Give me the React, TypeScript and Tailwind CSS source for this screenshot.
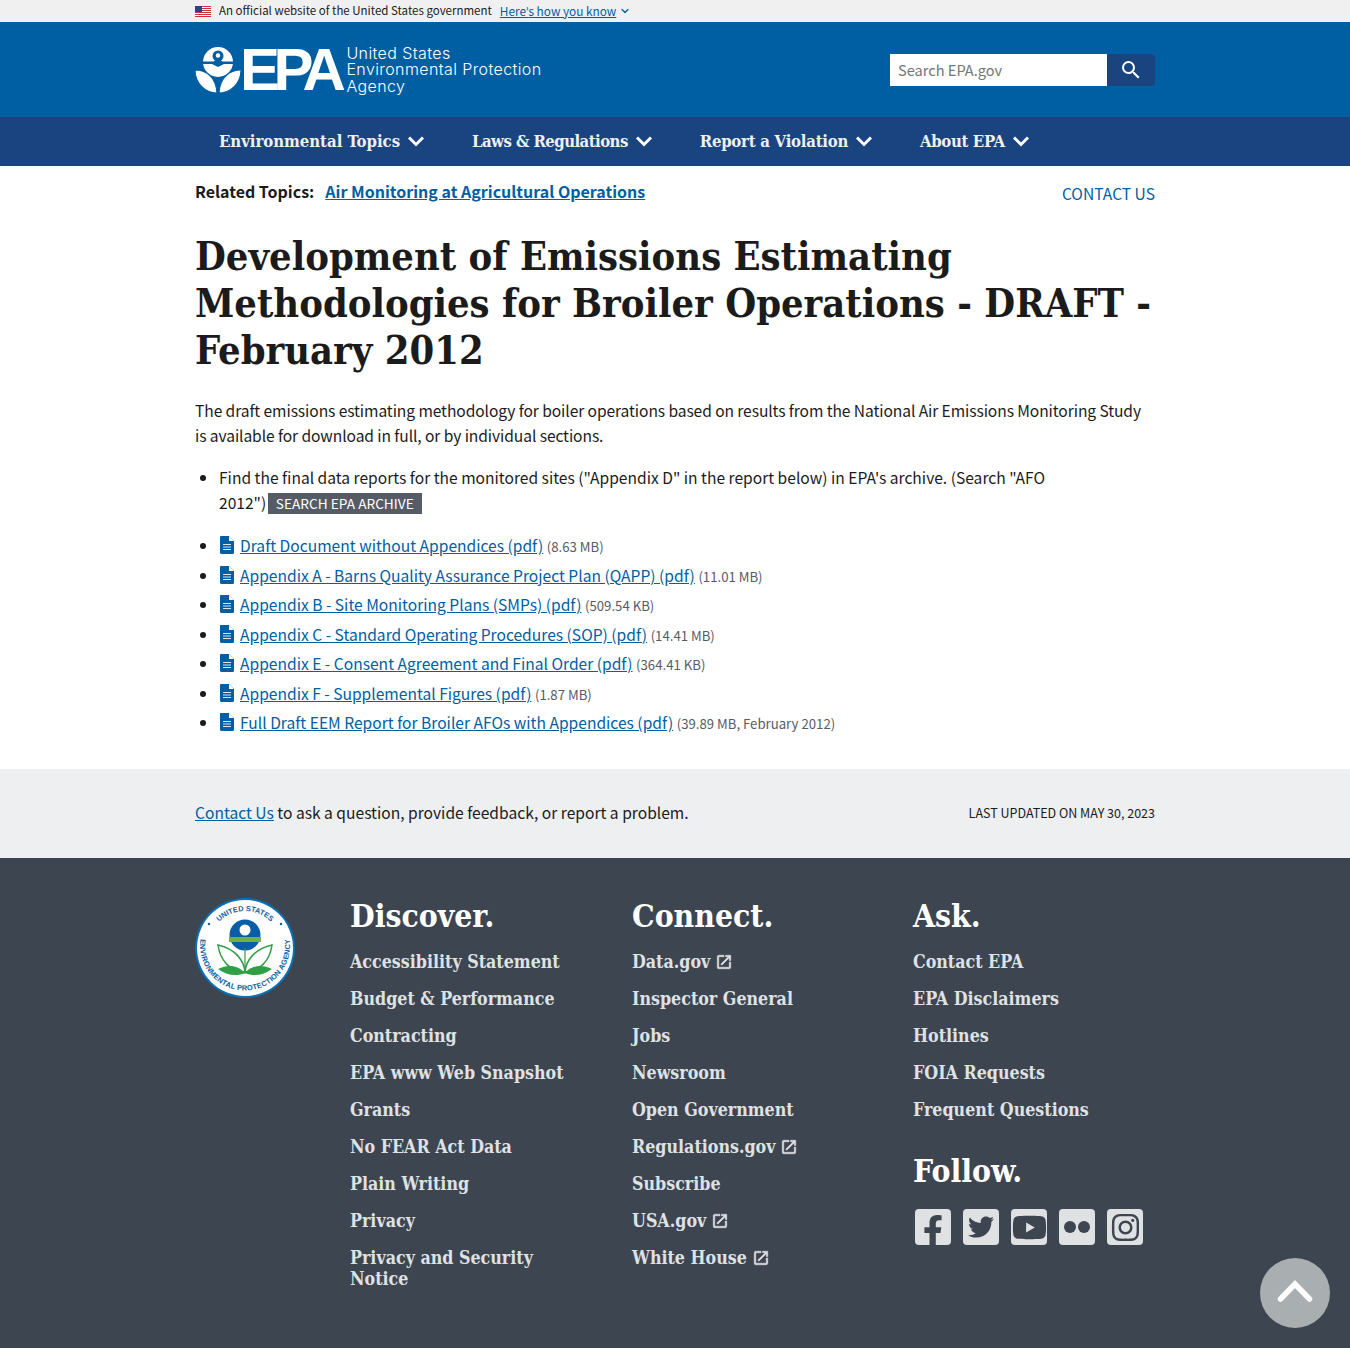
import { ChevronDown } from "lucide-react";
import { FaFacebookF, FaInstagram, FaTwitter, FaYoutube } from "react-icons/fa";

const sans = "font-['Noto_Sans_CJK_SC',Lato,sans-serif]";
const serif = "font-['DejaVu_Serif_Condensed','DejaVu_Serif',serif]";

const navItems = [
  ["Environmental Topics", "tracking-[-0.03px]"],
  ["Laws & Regulations", "tracking-[-0.55px]"],
  ["Report a Violation", "tracking-[-0.25px]"],
  ["About EPA", "tracking-[-0.35px]"],
];

const files = [
  ["Draft Document without Appendices (pdf)", "(8.63 MB)"],
  ["Appendix A - Barns Quality Assurance Project Plan (QAPP) (pdf)", "(11.01 MB)"],
  ["Appendix B - Site Monitoring Plans (SMPs) (pdf)", "(509.54 KB)"],
  ["Appendix C - Standard Operating Procedures (SOP) (pdf)", "(14.41 MB)"],
  ["Appendix E - Consent Agreement and Final Order (pdf)", "(364.41 KB)"],
  ["Appendix F - Supplemental Figures (pdf)", "(1.87 MB)"],
  ["Full Draft EEM Report for Broiler AFOs with Appendices (pdf)", "(39.89 MB, February 2012)"],
];

const discover = [
  "Accessibility Statement",
  "Budget & Performance",
  "Contracting",
  "EPA www Web Snapshot",
  "Grants",
  "No FEAR Act Data",
  "Plain Writing",
  "Privacy",
  "Privacy and Security Notice",
];

const connect: [string, boolean][] = [
  ["Data.gov", true],
  ["Inspector General", false],
  ["Jobs", false],
  ["Newsroom", false],
  ["Open Government", false],
  ["Regulations.gov", true],
  ["Subscribe", false],
  ["USA.gov", true],
  ["White House", true],
];

const ask = ["Contact EPA", "EPA Disclaimers", "Hotlines", "FOIA Requests", "Frequent Questions"];

function Flag() {
  return (
    <svg width="16" height="11" viewBox="0 0 16 11" className="shrink-0">
      <rect width="16" height="11" fill="#fff" />
      {[0, 2, 4, 6, 8, 10].map((y) => (
        <rect key={y} y={y} width="16" height="1" fill="#c8313e" />
      ))}
      <rect width="7" height="6" fill="#2f3f8f" />
    </svg>
  );
}

function EpaMark() {
  return (
    <svg width="46" height="46" viewBox="0 0 46 46" className="shrink-0">
      <circle cx="23" cy="15" r="15" fill="#fff" />
      <circle cx="23" cy="9" r="5.500" fill="#005ea2" />
      <circle cx="23" cy="8.500" r="2.200" fill="#fff" />
      <path d="M7 14.500h11c1.500 0 2.500-1 3-2.500h4c.5 1.500 1.500 2.500 3 2.500h11v2.500H29l-6 3-6-3H7z" fill="#005ea2" />
      <path d="M0 23c10 0 21 6 22 23C10 46 0 36 0 23z" fill="#fff" stroke="#005ea2" strokeWidth="1.200" />
      <path d="M46 23c-10 0-21 6-22 23 12 0 22-10 22-23z" fill="#fff" stroke="#005ea2" strokeWidth="1.200" />
    </svg>
  );
}

function Seal() {
  return (
    <svg width="100" height="100" viewBox="0 0 100 100" className="shrink-0">
      <circle cx="50" cy="50" r="50" fill="#0a70b5" />
      <circle cx="50" cy="50" r="48" fill="#fff" />
      <defs>
        <path id="sealTop" d="M13 50A37 37 0 0 1 87 50" />
        <path id="sealBottom" d="M6.500 36A45 45 0 1 0 93.500 36" />
      </defs>
      <text fontSize="7.400" fontWeight="700" fill="#0a5e9c" fontFamily="Liberation Sans, sans-serif">
        <textPath href="#sealTop" startOffset="50%" textAnchor="middle">UNITED STATES</textPath>
      </text>
      <text fontSize="7.400" fontWeight="700" letterSpacing="0.2" fill="#0a5e9c" fontFamily="Liberation Sans, sans-serif">
        <textPath href="#sealBottom" startOffset="50%" textAnchor="middle">ENVIRONMENTAL PROTECTION AGENCY</textPath>
      </text>
      <circle cx="14" cy="26" r="1.200" fill="#0a5e9c" />
      <circle cx="86" cy="26" r="1.200" fill="#0a5e9c" />
      <circle cx="50" cy="37" r="15.500" fill="#0a5ea8" />
      <rect x="34" y="39" width="32" height="5" fill="#6cb33f" />
      <circle cx="50" cy="32" r="5.500" fill="#fff" />
      <path d="M50 74c-1-11-9-23-27-27 2 15 12 27 27 27z" fill="#fff" stroke="#2f9e44" strokeWidth="1.500" />
      <path d="M50 74c1-11 9-23 27-27-2 15-12 27-27 27z" fill="#fff" stroke="#2f9e44" strokeWidth="1.500" />
      <path d="M50 75c-7-8-17-9-27-4 8 6 18 8 27 4z" fill="#2f9e44" />
      <path d="M50 75c7-8 17-9 27-4-8 6-18 8-27 4z" fill="#2f9e44" />
      <rect x="49.400" y="50" width="1.200" height="26" fill="#2f9e44" />
    </svg>
  );
}

function PdfIcon() {
  return (
    <svg width="16" height="18" viewBox="0 0 16 18" className="mr-[5px] inline-block shrink-0 align-[-2px]">
      <path d="M2 0h8l5 5v11.500a1.500 1.500 0 0 1-1.500 1.500h-11A1.500 1.500 0 0 1 1 16.500V1a1 1 0 0 1 1-1z" fill="#005ea2" />
      <path d="M10 0v5h5z" fill="#fff" />
      <path d="M4 8h8v1H4zM4 10.500h8v1H4zM4 13h8v1H4z" fill="#fff" fillOpacity="0.85" />
    </svg>
  );
}

function Launch() {
  return (
    <svg width="18" height="18" viewBox="0 0 24 24" fill="#dfe1e2" stroke="#dfe1e2" strokeWidth="0.7" className="ml-[5px] inline-block align-[-3px]">
      <path d="M19 19H5V5h7V3H5a2 2 0 0 0-2 2v14a2 2 0 0 0 2 2h14c1.100 0 2-.9 2-2v-7h-2v7zM14 3v2h3.590l-9.830 9.830 1.410 1.410L19 6.410V10h2V3h-7z" />
    </svg>
  );
}

function NavChevron() {
  return (
    <svg width="16" height="11" viewBox="0 0 16 11" fill="none" stroke="#fff" strokeWidth="3" className="ml-2 shrink-0">
      <polyline points="1,1.500 8,8.500 15,1.500" />
    </svg>
  );
}

function FooterLink({ label, external }: { label: string; external?: boolean }) {
  return (
    <li className={`${serif} mb-4 text-[17.700px] leading-[21px] font-bold text-[#dfe1e2]`}>
      {label}
      {external && <Launch />}
    </li>
  );
}

function FooterHeading({ children }: { children: string }) {
  return (
    <h2 className={`${serif} mb-4 text-[31.600px] leading-[38px] font-bold text-white`}>
      {children}
    </h2>
  );
}

function SocialBox({ children }: { children: React.ReactNode }) {
  return (
    <div className="relative flex h-9 w-9 items-center justify-center overflow-hidden rounded-[4px] bg-[#dfe1e2] text-[#3d4551]">
      {children}
    </div>
  );
}

export default function App() {
  return (
    <div className={`${sans} relative min-h-[1348px] bg-white text-[15.600px] leading-[25px] text-[#1b1b1b]`}>
      <div className="h-[22px] bg-[#f0f0f0]">
        <div className="mx-auto flex h-full w-[960px] items-center text-[11.500px] leading-none">
          <Flag />
          <span className="ml-2">An official website of the United States government</span>
          <a className="ml-2 text-[11.800px] text-[#005ea2] underline">
            Here<span className="font-['Lato',sans-serif]">’</span>s how you know
          </a>
          <ChevronDown size={12} strokeWidth={2.500} className="ml-[3px] text-[#005ea2]" />
        </div>
      </div>

      <header className="h-[95px] bg-[#005ea2]">
        <div className="mx-auto flex h-full w-[960px] items-center justify-between">
          <div className="flex items-center">
            <EpaMark />
            <span className="-ml-px font-['Liberation_Sans',sans-serif] text-[60px] leading-none font-bold tracking-[-6.500px] text-white">
              EPA
            </span>
            <div className="ml-[7px] font-['Inter',sans-serif] text-[16px] leading-[16.500px] tracking-[0.4px] font-light text-white">
              <div>United States</div>
              <div>Environmental Protection</div>
              <div>Agency</div>
            </div>
          </div>
          <div className="flex h-8 w-[265px]">
            <input
              placeholder="Search EPA.gov"
              className="h-8 w-[217px] bg-white px-2 text-[14.600px] outline-none placeholder:text-[#71767a]"
            />
            <button className="flex h-8 w-[48px] items-center justify-center rounded-r-[4px] bg-[#1a4480] text-white">
              <svg width="24" height="24" viewBox="0 0 24 24" fill="currentColor">
                <path d="M15.500 14h-.79l-.28-.27A6.471 6.471 0 0 0 16 9.500 6.500 6.500 0 1 0 9.500 16c1.610 0 3.090-.59 4.230-1.570l.27.28v.79l5 4.990L20.490 19l-4.990-5zm-6 0C7.010 14 5 11.990 5 9.500S7.010 5 9.500 5 14 7.010 14 9.500 11.990 14 9.500 14z" />
              </svg>
            </button>
          </div>
        </div>
      </header>

      <nav className="h-[49px] bg-[#1a4480]">
        <div className={`${serif} mx-auto flex h-full w-[960px] items-center text-[16.600px] font-bold text-[#f0f0f0]`}>
          {navItems.map(([item, spacing]) => (
            <div key={item} className={`flex items-center px-6 ${spacing}`}>
              {item}
              <NavChevron />
            </div>
          ))}
        </div>
      </nav>

      <main className="mx-auto w-[960px]">
        <div className="flex items-start justify-between pt-[13px]">
          <div className="text-[16px] font-bold">
            Related Topics:
            <a className="ml-[11px] text-[#005ea2] underline">Air Monitoring at Agricultural Operations</a>
          </div>
          <a className="pt-[2px] text-[#005ea2]">CONTACT US</a>
        </div>

        <h1 className={`${serif} mt-[27px] text-[39.500px] leading-[47px] font-bold text-[#1b1b1b]`}>
          Development of Emissions Estimating Methodologies for Broiler Operations - DRAFT - February 2012
        </h1>

        <p className="mt-[24px] tracking-[-0.09px]">
          The draft emissions estimating methodology for boiler operations based on results from the National Air
          Emissions Monitoring Study is available for download in full, or by individual sections.
        </p>

        <ul className="mt-[17px] max-w-[880px] list-disc pl-6">
          <li>
            Find the final data reports for the monitored sites ("Appendix D" in the report below) in EPA's archive.
            (Search "AFO 2012"){" "}
            <span className="-ml-[2px] inline-block h-[21px] bg-[#565c65] px-2 text-[13.700px] leading-[21px] text-white">
              SEARCH EPA ARCHIVE
            </span>
          </li>
        </ul>

        <ul className="mt-[18px] list-disc pl-6">
          {files.map(([name, size]) => (
            <li key={name} className="mb-[3.500px]">
              <PdfIcon />
              <a className="text-[#005ea2] underline">{name}</a>{" "}
              <span className="text-[13.200px] text-[#565c65]">{size}</span>
            </li>
          ))}
        </ul>
      </main>

      <section className="mt-[33px] h-[89px] bg-[#edeff0]">
        <div className="mx-auto flex h-full w-[960px] items-center justify-between pb-[2px]">
          <div>
            <a className="text-[#005ea2] underline">Contact Us</a> to ask a question, provide feedback, or report a
            problem.
          </div>
          <div className="text-[12.500px]">LAST UPDATED ON MAY 30, 2023</div>
        </div>
      </section>

      <footer className="h-[490px] bg-[#3d4551]">
        <div className="mx-auto flex w-[960px] pt-[39px]">
          <div className="w-[155px] pt-px">
            <Seal />
          </div>
          <div className="w-[282px] pr-[50px]">
            <FooterHeading>Discover.</FooterHeading>
            <ul>
              {discover.map((label) => (
                <FooterLink key={label} label={label} />
              ))}
            </ul>
          </div>
          <div className="w-[281px]">
            <FooterHeading>Connect.</FooterHeading>
            <ul>
              {connect.map(([label, external]) => (
                <FooterLink key={label} label={label} external={external} />
              ))}
            </ul>
          </div>
          <div>
            <FooterHeading>Ask.</FooterHeading>
            <ul>
              {ask.map((label) => (
                <FooterLink key={label} label={label} />
              ))}
            </ul>
            <div className="mt-[32px]">
              <FooterHeading>Follow.</FooterHeading>
            </div>
            <div className="mt-[19px] ml-[2px] flex gap-3">
              <SocialBox>
                <FaFacebookF size={32} className="translate-y-[4px]" />
              </SocialBox>
              <SocialBox>
                <FaTwitter size={26} />
              </SocialBox>
              <SocialBox>
                <FaYoutube size={35} />
              </SocialBox>
              <SocialBox>
                <div className="flex gap-[2px]">
                  <span className="h-3 w-3 rounded-full bg-[#3d4551]" />
                  <span className="h-3 w-3 rounded-full bg-[#3d4551]" />
                </div>
              </SocialBox>
              <SocialBox>
                <FaInstagram size={31} />
              </SocialBox>
            </div>
          </div>
        </div>
      </footer>

      <div className="absolute top-[1258px] left-[1260px] flex h-[70px] w-[70px] items-center justify-center rounded-full bg-[#a9aeb1]">
        <svg width="36" height="24" viewBox="0 0 36 24" fill="none" stroke="#fff" strokeWidth="5.500" strokeLinecap="round" className="-mt-1">
          <polyline points="3.500,20 18,5 32.500,20" />
        </svg>
      </div>
    </div>
  );
}
